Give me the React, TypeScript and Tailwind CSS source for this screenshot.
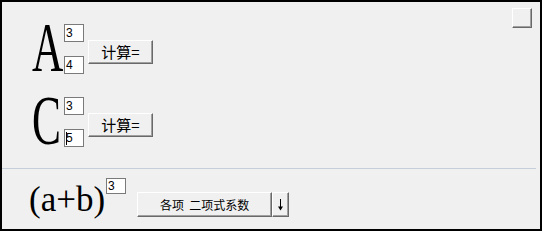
import React from "react";

const raised =
  "bg-[#f0f0f0] border border-t-white border-l-white border-r-[#696969] border-b-[#696969] shadow-[inset_-1px_-1px_0_#a0a0a0]";

function Box({ value, caret, h = "h-[18px]" }: { value: string; caret?: boolean; h?: string }) {
  return (
    <div
      className={`w-[20px] ${h} bg-white border border-[#7a7a7a] flex items-center pl-[1px] text-[12px] leading-none text-black`}
      style={{ fontFamily: '"Liberation Sans", Arial, sans-serif' }}
    >
      {caret && <span className="w-px h-[13px] bg-black -mr-px" />}
      <span>{value}</span>
    </div>
  );
}

function CalcButton() {
  return (
    <div
      className={`ml-[4px] mt-[16px] w-[65px] h-[24px] ${raised} flex items-center justify-center text-[15px] text-black`}
      style={{ fontFamily: '"Noto Sans CJK SC", sans-serif' }}
    >
      计算=
    </div>
  );
}

function BigLetter({ ch }: { ch: string }) {
  return (
    <div className="w-[32px] h-[47px] pt-[1px]">
      <span
        className="inline-block origin-left scale-x-[0.62] text-[70px] leading-[46px] text-black"
        style={{ fontFamily: '"Liberation Serif", "Times New Roman", serif' }}
      >
        {ch}
      </span>
    </div>
  );
}

function Row({ ch, a, b, caret }: { ch: string; a: string; b: string; caret?: boolean }) {
  return (
    <div className="flex items-start">
      <BigLetter ch={ch} />
      <div className="flex flex-col gap-[14px]">
        <Box value={a} />
        <Box value={b} caret={caret} />
      </div>
      <CalcButton />
    </div>
  );
}

export default function App() {
  return (
    <div className="w-[542px] h-[231px] border-2 border-black bg-[#f0f0f0] flex flex-col overflow-hidden">
      <div className="h-[166px] flex">
        <div className="pl-[30px] pt-[22px] flex flex-col gap-[23px]">
          <Row ch="A" a="3" b="4" />
          <Row ch="C" a="3" b="5" caret />
        </div>
        <div className={`ml-auto mt-[6px] mr-[8px] w-[20px] h-[20px] ${raised}`} />
      </div>
      <div className="w-[534px] h-px bg-[#c5cfd9]" />
      <div className="flex items-start pl-[27px] pt-[9px]">
        <div
          className="mt-[4px] text-[35px] leading-[35px] text-black"
          style={{ fontFamily: '"Liberation Serif", "Times New Roman", serif' }}
        >
          (a+b)
        </div>
        <div className="ml-[1px]">
          <Box value="3" h="h-[16px]" />
        </div>
        <div
          className="ml-[11px] mt-[14px] flex h-[25px] text-[12px] text-black"
          style={{ fontFamily: '"Noto Sans CJK SC", sans-serif' }}
        >
          <div className={`w-[135px] h-full ${raised} flex items-center justify-center`}>
            各项&nbsp;&nbsp;二项式系数
          </div>
          <div className={`w-[17px] h-full ${raised} flex items-center justify-center`}>
            <svg width="7" height="12" viewBox="0 0 7 12" className="mt-[1px]">
              <path d="M3.5 0 V10" stroke="#000" strokeWidth="1" />
              <path d="M1 7.5 L3.5 11.5 L6 7.5 Z" fill="#000" />
            </svg>
          </div>
        </div>
      </div>
    </div>
  );
}
